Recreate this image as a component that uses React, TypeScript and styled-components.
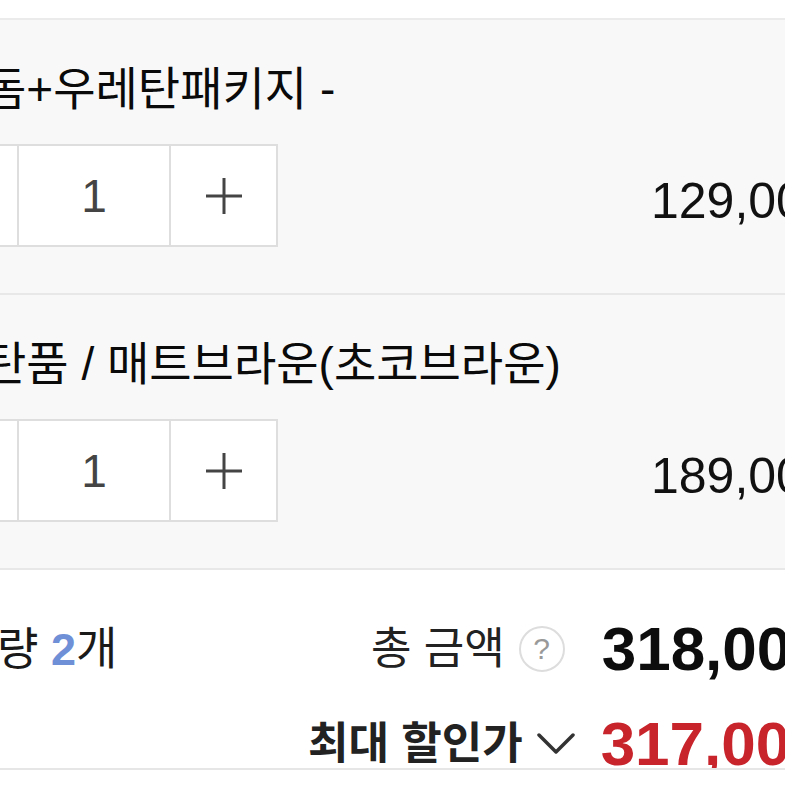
import React from "react";
import styled, { createGlobalStyle } from "styled-components";

const GlobalStyle = createGlobalStyle`
  html, body {
    margin: 0;
    padding: 0;
    background: #ffffff;
    overflow: hidden;
  }
  body {
    font-family: "Liberation Sans", "Noto Sans CJK KR", sans-serif;
    color: #111;
  }
`;

const Screen = styled.div`
  width: 785px;
  height: 785px;
  overflow: hidden;
  padding-top: 18px;
  box-sizing: border-box;
  background: #fff;
`;

const Item = styled.section`
  background: #f8f8f8;
  border-bottom: 2px solid #e8e8e8;
  padding: 45px 0 46px;
  overflow: hidden;

  &:first-child {
    border-top: 2px solid #ebebeb;
  }
`;

const OptionTitle = styled.div<{ $shift: number }>`
  margin-left: ${(p) => p.$shift}px;
  font-size: 46px;
  line-height: 48px;
  height: 48px;
  white-space: nowrap;
  color: #0a0a0a;
`;

const QtyRow = styled.div`
  display: flex;
  align-items: center;
  margin-top: 31px;
  white-space: nowrap;
`;

const Stepper = styled.div`
  display: flex;
  flex-shrink: 0;
  margin-left: -90px;
  height: 103px;
  box-sizing: border-box;
  border: 2px solid #dedede;
  background: #fff;
`;

const StepCell = styled.div<{ $w: number }>`
  width: ${(p) => p.$w}px;
  display: flex;
  align-items: center;
  justify-content: center;
  color: #444;
  font-size: 46px;

  & + & {
    border-left: 2px solid #dedede;
  }
`;

const LinePrice = styled.div`
  margin-left: 373px;
  font-size: 50px;
  color: #111;
  flex-shrink: 0;
`;

const Summary = styled.section`
  height: 200px;
  box-sizing: border-box;
  padding-top: 48px;
  border-bottom: 2px solid #e6e6e6;
  overflow: hidden;
  display: flex;
  flex-direction: column;
  gap: 33px;
`;

const SummaryRow = styled.div<{ $lead: number }>`
  display: grid;
  grid-template-columns: ${(p) => p.$lead}px max-content;
  align-items: center;
  height: 64px;
  line-height: 1;
  white-space: nowrap;
`;

const CountLabel = styled.div`
  margin-left: -3px;
  font-size: 45px;
  color: #1a1a1a;
`;

const CountNum = styled.span`
  color: #6f8fd6;
  font-weight: 700;
`;

const PriceGroup = styled.div<{ $gap: number }>`
  display: flex;
  align-items: center;
  gap: 14px;

  & > :last-child {
    margin-left: ${(p) => p.$gap}px;
  }
`;

const SumLabel = styled.span<{ $strong?: boolean }>`
  font-size: 44px;
  color: #222;
  font-weight: ${(p) => (p.$strong ? 700 : 400)};
`;

const HelpBadge = styled.span`
  width: 46px;
  height: 46px;
  box-sizing: border-box;
  border: 2px solid #dddddd;
  border-radius: 50%;
  display: inline-flex;
  align-items: center;
  justify-content: center;
  color: #999;
  font-size: 30px;
  font-weight: 400;
`;

const BigPrice = styled.span<{ $red?: boolean }>`
  font-size: 62px;
  font-weight: 700;
  color: ${(p) => (p.$red ? "#c8242c" : "#0d0d0d")};
`;

const PlusIcon = () => (
  <svg width="36" height="36" viewBox="0 0 36 36">
    <path d="M18 0v36M0 18h36" stroke="#444" strokeWidth="3" />
  </svg>
);

const MinusIcon = () => (
  <svg width="36" height="36" viewBox="0 0 36 36">
    <path d="M0 18h36" stroke="#444" strokeWidth="3" />
  </svg>
);

const Chevron = () => (
  <svg width="38" height="22" viewBox="0 0 38 22">
    <path
      d="M2 2l17 17L36 2"
      fill="none"
      stroke="#333"
      strokeWidth="3.5"
      strokeLinecap="round"
      strokeLinejoin="round"
    />
  </svg>
);

const items = [
  { title: "돔+우레탄패키지 -", shift: -16, qty: 1, price: "129,000원" },
  { title: "탄품 / 매트브라운(초코브라운)", shift: -16, qty: 1, price: "189,000원" },
];

export default function App() {
  return (
    <Screen>
      <GlobalStyle />
      {items.map((it) => (
        <Item key={it.title}>
          <OptionTitle $shift={it.shift}>{it.title}</OptionTitle>
          <QtyRow>
            <Stepper>
              <StepCell $w={105}>
                <MinusIcon />
              </StepCell>
              <StepCell $w={150}>{it.qty}</StepCell>
              <StepCell $w={105}>
                <PlusIcon />
              </StepCell>
            </Stepper>
            <LinePrice>{it.price}</LinePrice>
          </QtyRow>
        </Item>
      ))}
      <Summary>
        <SummaryRow $lead={371}>
          <CountLabel>
            량 <CountNum>2</CountNum>개
          </CountLabel>
          <PriceGroup $gap={23}>
            <SumLabel>총 금액</SumLabel>
            <HelpBadge>?</HelpBadge>
            <BigPrice>318,000원</BigPrice>
          </PriceGroup>
        </SummaryRow>
        <SummaryRow $lead={308}>
          <span />
          <PriceGroup $gap={12}>
            <SumLabel $strong>최대 할인가</SumLabel>
            <Chevron />
            <BigPrice $red>317,000원</BigPrice>
          </PriceGroup>
        </SummaryRow>
      </Summary>
    </Screen>
  );
}
